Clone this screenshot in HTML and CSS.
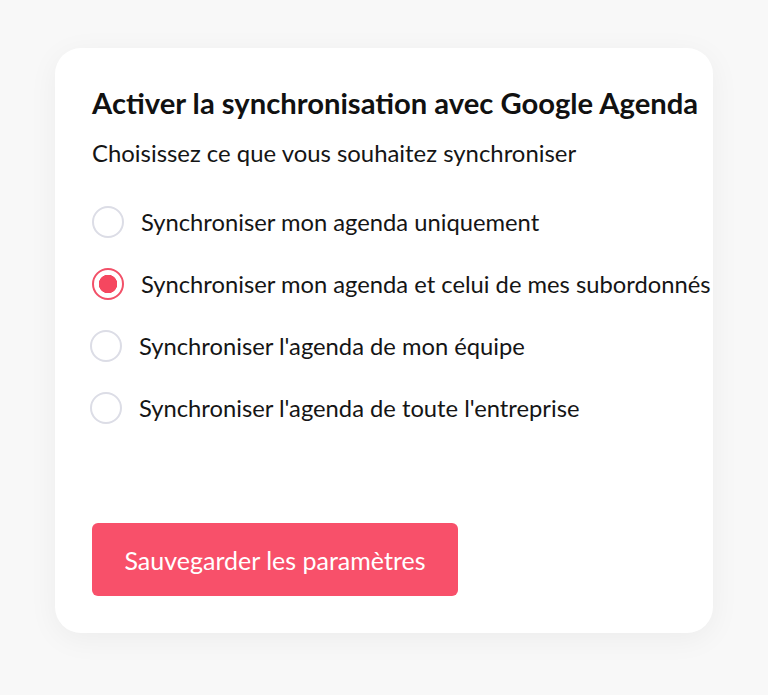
FILE: index.html
```html
<!DOCTYPE html>
<html lang="fr">
<head>
<meta charset="utf-8">
<link rel="stylesheet" href="styles.css">
</head>
<body>
<div class="page">
  <div class="card">
    <h1 class="title">Activer la synchronisation avec Google Agenda</h1>
    <p class="subtitle">Choisissez ce que vous souhaitez synchroniser</p>
    <div class="options">
      <label class="option"><span class="radio"></span><span class="label">Synchroniser mon agenda uniquement</span></label>
      <label class="option"><span class="radio checked"></span><span class="label">Synchroniser mon agenda et celui de mes subordonnés</span></label>
      <label class="option shifted"><span class="radio"></span><span class="label">Synchroniser l'agenda de mon équipe</span></label>
      <label class="option shifted"><span class="radio"></span><span class="label">Synchroniser l'agenda de toute l'entreprise</span></label>
    </div>
    <button class="save">Sauvegarder les paramètres</button>
  </div>
</div>
</body>
</html>
```
FILE: styles.css
```css
html, body {
  margin: 0;
  padding: 0;
  background: #f8f8f8;
  width: 768px;
  height: 695px;
  overflow: hidden;
}
.page {
  padding: 48px 0 0 55px;
  font-family: Lato, "Noto Sans", sans-serif;
  color: #111;
}
.card {
  width: 658px;
  height: 585px;
  box-sizing: border-box;
  background: #fff;
  border-radius: 26px;
  box-shadow: 0 6px 30px rgba(0,0,0,0.05);
  padding: 37px 0 0 37px;
  display: flex;
  flex-direction: column;
  align-items: flex-start;
}
.title {
  margin: 0;
  font-size: 29.2px;
  font-weight: 700;
  line-height: 36px;
  white-space: nowrap;
}
.subtitle {
  margin: 17px 0 0 0;
  font-size: 23.9px;
  line-height: 30px;
  color: #151515;
  white-space: nowrap;
}
.options {
  margin-top: 38px;
  display: flex;
  flex-direction: column;
  gap: 30px;
}
.option {
  display: flex;
  align-items: center;
  gap: 17px;
  height: 32px;
  white-space: nowrap;
}
.option.shifted {
  margin-left: -2px;
}
.radio {
  width: 32px;
  height: 32px;
  box-sizing: border-box;
  border: 2px solid #dcdde6;
  border-radius: 50%;
  flex: none;
}
.radio.checked {
  border: 2px solid #f25068;
  background: radial-gradient(circle, #f5475f 0 9px, #fff 9.5px);
}
.label {
  font-size: 23.75px;
  line-height: 32px;
  color: #151515;
}
.save {
  margin-top: 99px;
  width: 366px;
  height: 73px;
  border: none;
  border-radius: 6px;
  background: #f8506a;
  color: #fff;
  font-family: Lato, "Noto Sans", sans-serif;
  font-size: 25px;
  text-align: center;
  padding: 0;
}
```
